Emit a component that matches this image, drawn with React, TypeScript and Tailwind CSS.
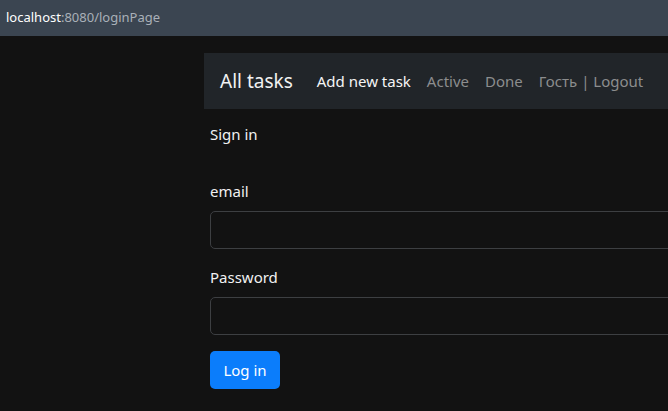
const NAV_LINKS = [
  { label: 'Add new task', active: true },
  { label: 'Active', active: false },
  { label: 'Done', active: false },
  { label: 'Гость | Logout', active: false },
];

function Field({ label }: { label: string }) {
  return (
    <div className="flex flex-col">
      <label className="text-[15px] leading-6 text-[#f1f1f1] mb-2">{label}</label>
      <input className="h-[38px] w-full rounded-[5px] border border-[#3d3f42] bg-[#121212] outline-none" />
    </div>
  );
}

export default function App() {
  return (
    <div className="min-h-[411px] bg-[#121212] overflow-hidden" style={{ fontFamily: '"Noto Sans", "Open Sans", sans-serif' }}>
      <div className="h-9 bg-[#3b4551] flex items-center pl-[6px] text-[13px]">
        <span className="text-white">localhost</span>
        <span className="text-[#a9b0b8]">:8080/loginPage</span>
      </div>

      <div className="pl-[204px] pt-[17px] w-[800px]">
        <nav className="h-14 bg-[#212529] flex items-center pl-4">
          <span className="text-[19px] text-[#f2f2f2] mr-6">All tasks</span>
          <div className="flex items-center gap-4">
            {NAV_LINKS.map(({ label, active }) => (
              <span key={label} className={`text-[15px] ${active ? 'text-[#f5f5f5]' : 'text-[#8c8d8e]'}`}>
                {label}
              </span>
            ))}
          </div>
        </nav>

        <div className="pl-[6px] flex flex-col">
          <h1 className="text-[15px] leading-6 text-[#f1f1f1] mt-[13px] mb-[33px]">Sign in</h1>
          <div className="flex flex-col gap-4">
            <Field label="email" />
            <Field label="Password" />
            <div>
              <button className="h-[38px] w-[70px] rounded-[5px] bg-[#0b7dfb] text-white text-[15px]">Log in</button>
            </div>
          </div>
        </div>
      </div>
    </div>
  );
}
